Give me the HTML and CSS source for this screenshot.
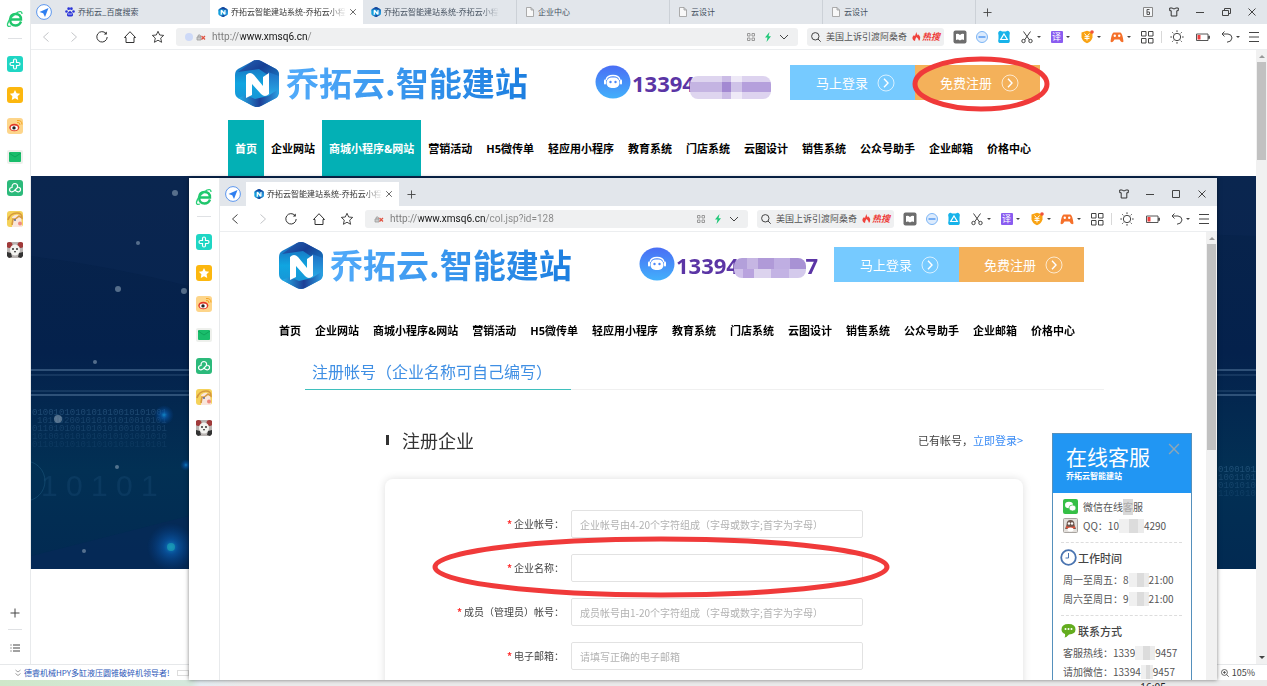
FILE: index.html
```html
<!DOCTYPE html>
<html lang="zh-CN">
<head>
<meta charset="utf-8">
<title>乔拓云智能建站系统</title>
<link rel="stylesheet" href="styles.css">
</head>
<body>
<svg class="defs" aria-hidden="true">
  <defs>
    <linearGradient id="g-left" x1="0" y1="0" x2="0" y2="1"><stop offset="0" stop-color="#1b62b8"/><stop offset=".5" stop-color="#10a5e0"/><stop offset="1" stop-color="#1b8fd2"/></linearGradient>
    <linearGradient id="g-top" x1="0" y1="0" x2="1" y2="1"><stop offset="0" stop-color="#2467b8"/><stop offset=".4" stop-color="#173f94"/><stop offset="1" stop-color="#1a93d8"/></linearGradient>
    <linearGradient id="g-right" x1="0" y1="0" x2="0" y2="1"><stop offset="0" stop-color="#1f6fc4"/><stop offset="1" stop-color="#2ab0ea"/></linearGradient>
    <linearGradient id="g-bot" x1="0" y1="0" x2="1" y2="0"><stop offset="0" stop-color="#25b4ec"/><stop offset=".55" stop-color="#1e3f96"/><stop offset="1" stop-color="#2b9be0"/></linearGradient>
    <linearGradient id="g-head" x1="0" y1="0" x2="0" y2="1"><stop offset="0" stop-color="#4a6ef5"/><stop offset="1" stop-color="#42b0fb"/></linearGradient>
    <radialGradient id="g-glow"><stop offset="0" stop-color="#0f86c4"/><stop offset=".3" stop-color="#0a5cae" stop-opacity=".7"/><stop offset="1" stop-color="#04408c" stop-opacity="0"/></radialGradient>
  </defs>
  <symbol id="i-logo" viewBox="0 0 44 47">
    <path d="M22 0Q24 0 26 1L41 9Q44 11 44 15V32Q44 36 41 38L26 46Q22 48 18 46L3 38Q0 36 0 32V15Q0 11 3 9L18 1Q20 0 22 0Z" fill="url(#g-left)"/>
    <path d="M3 12L18 1Q22-1 26 1L41 9Q44 11 44 15V33L33 26V15L24 9Z" fill="url(#g-top)"/>
    <path d="M33 12L44 16V33L38 38L33 36Z" fill="url(#g-right)"/>
    <path d="M11 35L20 39L33 36L42 30Q44 36 41 38L26 46Q22 48 18 46L3 38Z" fill="url(#g-bot)"/>
    <path d="M11 38V15Q15 11 19 15L28 26V17L34 13V34Q30 38 26 34L17 24V35Z" fill="#fff"/>
  </symbol>
  <symbol id="i-e" viewBox="0 0 18 18">
    <path d="M15 11.500Q13.500 15.500 9.500 15.500Q4.500 15.500 4 9.500Q4.500 4 9.500 4Q15 4 15 9.500H5" fill="none" stroke="#1fc66c" stroke-width="2.400"/>
    <path d="M5 16Q1 17.500 1.500 14Q3 8 12 2Q16 .5 16 4" fill="none" stroke="#28cf76" stroke-width="1.300"/>
  </symbol>
  <symbol id="i-plus4" viewBox="0 0 16 16"><rect width="16" height="16" rx="3" fill="#1fd6c4"/><path d="M6.500 6.500V4.500a1.500 1.500 0 0 1 3 0v2h2a1.500 1.500 0 0 1 0 3h-2v2a1.500 1.500 0 0 1-3 0v-2h-2a1.500 1.500 0 0 1 0-3z" fill="none" stroke="#fff" stroke-width="1.200"/></symbol>
  <symbol id="i-fav" viewBox="0 0 16 16"><rect width="16" height="16" rx="3" fill="#fcb70f"/><path d="M8 3l1.600 3.300 3.600.5-2.600 2.500.6 3.600L8 11.200l-3.200 1.700.6-3.600L2.800 6.800l3.600-.5z" fill="#fff"/></symbol>
  <symbol id="i-weibo" viewBox="0 0 16 16"><rect width="16" height="16" rx="3" fill="#fdd58a"/><ellipse cx="7.300" cy="9.500" rx="5" ry="3.800" fill="#e23a27"/><ellipse cx="7.300" cy="9.900" rx="3.600" ry="2.400" fill="#fff"/><circle cx="7" cy="9.900" r="1.700" fill="#222"/><path d="M10 4.500q3-.5 3 2.500M10 2.500q5-.5 5 4" stroke="#f5a523" fill="none"/></symbol>
  <symbol id="i-mail" viewBox="0 0 16 16"><rect y="1" width="16" height="14" rx="2" fill="#eef0ec"/><rect x="2" y="3" width="12" height="10" rx="1" fill="#19bd6b"/><path d="M2 4l6 4 6-4" stroke="#0a9a52" stroke-width=".7" fill="none"/></symbol>
  <symbol id="i-cloud" viewBox="0 0 16 16"><rect width="16" height="16" rx="3" fill="#2cba7b"/><path d="M10.500 7.500L7 11Q3.500 13 2.500 10Q2.500 7.500 5 7.500Q5 3.500 8 3.500Q11 4 10.500 7Q14 7.500 13.500 10Q12.500 13 9 11L8 10" fill="none" stroke="#fff" stroke-width="1.200"/></symbol>
  <symbol id="i-girl" viewBox="0 0 16 16"><rect width="16" height="16" rx="3" fill="#f5d25a"/><path d="M5 6Q9 2 14 5L15 16H5Z" fill="#f9e6dc"/><path d="M1 9Q3 2 10 2Q15 2 15 7L12 5Q8 9 6 8L5 14" fill="none" stroke="#d69a3e" stroke-width="1.600"/><circle cx="8" cy="9" r="1" fill="#5a6a9a"/><circle cx="13" cy="12.500" r="2" fill="#ef8a80"/></symbol>
  <symbol id="i-panda" viewBox="0 0 16 16"><rect width="16" height="16" rx="3" fill="#b9b4b2"/><circle cx="2.500" cy="3" r="3" fill="#a03a3a"/><circle cx="13.500" cy="3" r="3" fill="#a03a3a"/><ellipse cx="8" cy="8" rx="5" ry="5.500" fill="#f3f3f0"/><path d="M0 10l4 1 1 4-3 1-2-2zM16 10l-4 1-1 4 3 1 2-2z" fill="#333"/><circle cx="6" cy="7" r="1" fill="#333"/><circle cx="10" cy="7" r="1" fill="#333"/><path d="M7 9h2l-1 2z" fill="#222"/></symbol>
  <symbol id="i-plane" viewBox="0 0 16 16"><circle cx="8" cy="8" r="7.400" fill="#fff" stroke="#5b96ee"/><path d="M12.500 4L3.500 8l3.700 1.200L9 13z" fill="#2f7ff0"/></symbol>
  <symbol id="i-baidu" viewBox="0 0 10 10"><circle cx="1.500" cy="4.500" r="1.300" fill="#2b35d8"/><circle cx="3.700" cy="1.700" r="1.400" fill="#2b35d8"/><circle cx="6.400" cy="1.700" r="1.400" fill="#2b35d8"/><circle cx="8.500" cy="4.500" r="1.300" fill="#2b35d8"/><path d="M5 3.800Q6.500 4.500 8 7Q8.500 9.800 6 9.500H4Q1.500 9.800 2 7Q3.500 4.500 5 3.800z" fill="#2b35d8"/><path d="M4 6v2M6 6v2" stroke="#fff" stroke-width=".7"/></symbol>
  <symbol id="i-page" viewBox="0 0 10 10"><path d="M1.500.5h4.500l2.500 2.500v6.500h-7zM6 .5v2.500h2.500" fill="#f8f8f8" stroke="#999" stroke-width=".8"/></symbol>
  <symbol id="i-x" viewBox="0 0 10 10"><path d="M1.500 1.500l7 7M8.500 1.500l-7 7" stroke="currentColor" fill="none"/></symbol>
  <symbol id="i-add" viewBox="0 0 10 10"><path d="M5 .5v9M.5 5h9" stroke="#444" fill="none"/></symbol>
  <symbol id="i-back" viewBox="0 0 12 12"><path d="M8.500 1.500L3.500 6l5 4.500" fill="none" stroke="currentColor"/></symbol>
  <symbol id="i-fwd" viewBox="0 0 12 12"><path d="M3.500 1.500L8.500 6l-5 4.500" fill="none" stroke="currentColor"/></symbol>
  <symbol id="i-reload" viewBox="0 0 12 12"><path d="M10 2.500A5.200 5.200 0 1 0 11.200 6" fill="none" stroke="#333"/><path d="M10.800.5v3h-3z" fill="#333"/></symbol>
  <symbol id="i-home" viewBox="0 0 12 12"><path d="M2 11.500V6.500H.5L6 .7l5.500 5.800H10v5z" fill="none" stroke="#333"/></symbol>
  <symbol id="i-star" viewBox="0 0 12 12"><path d="M6 .3l1.700 3.700 4 .4-3 2.700.9 4.200L6 9.200l-3.600 2.100.9-4.200-3-2.700 4-.4z" fill="none" stroke="#333" stroke-width=".9"/></symbol>
  <symbol id="i-lock" viewBox="0 0 10 8"><path d="M1 4h4v3H1zM2 4V2.500q1-1.500 2.500 0V4" fill="#ccc" stroke="#999" stroke-width=".8"/><path d="M5.500 3l3.500 3.500M9 3L5.500 6.500" stroke="#e0503f" stroke-width="1.200"/></symbol>
  <symbol id="i-qr" viewBox="0 0 8 8"><path d="M.5.500h2.500v2.500H.500zM5 .5h2.500v2.500H5zM.500 5h2.500v2.500H.500zM5 5h2.500v2.500H5z" fill="none" stroke="#999"/></symbol>
  <symbol id="i-bolt" viewBox="0 0 8 10"><path d="M5.500 0L1 5.500h2.500L2.500 10 7 4.200H4.500z" fill="#1fc878"/></symbol>
  <symbol id="i-down" viewBox="0 0 10 6"><path d="M1 1l4 4 4-4" fill="none" stroke="#444"/></symbol>
  <symbol id="i-search" viewBox="0 0 10 10"><circle cx="4.300" cy="4.300" r="3.700" fill="none" stroke="#444"/><path d="M7 7l2.700 2.700" stroke="#444"/></symbol>
  <symbol id="i-zoom" viewBox="0 0 10 10"><circle cx="4.300" cy="4.300" r="3.700" fill="none" stroke="#444"/><path d="M7 7l2.700 2.700M2.500 4.300h3.600M4.300 2.500v3.600" stroke="#444"/></symbol>
  <symbol id="i-chev" viewBox="0 0 8 8"><path d="M1.500 1L4 3l2.500-2M1.500 4.500L4 6.500l2.500-2" fill="none" stroke="#888" stroke-width=".8"/></symbol>
  <symbol id="i-fire" viewBox="0 0 9 9"><path d="M4.500 0Q4.500 2 6 3.500L6.500 2.300Q9 5 8 7.500L7 9Q6.500 6.500 4.500 5Q3 7 3 9Q0 8 .5 5L2 3Q2.500 4 3 4Q3.500 2 4.500 0z" fill="#f0423c"/></symbol>
  <symbol id="i-book" viewBox="0 0 14 14"><rect x=".5" y=".5" width="13" height="13" rx="2" fill="#6d6d6d"/><path d="M3 4q2-1 4 1q2-2 4-1v6q-2-1-4 .5q-2-1.500-4-.5z" fill="#fff"/></symbol>
  <symbol id="i-dots" viewBox="0 0 14 14"><circle cx="7" cy="7" r="5.500" fill="#dcebfd" stroke="#7db5f5"/><path d="M3.500 7h7" stroke="#4b94ef" stroke-width="1.400"/></symbol>
  <symbol id="i-tri" viewBox="0 0 14 14"><path d="M2.500 1Q4 .5 5 1.500h4Q10 .5 11.500 1Q13.500 2 12.500 5v4Q13.500 12 11.500 13H2.500Q.5 12 1.500 9V5Q.5 2 2.500 1z" fill="#17b3ea"/><path d="M7 4l3.300 5.500H3.700z" fill="none" stroke="#fff" stroke-width="1.200"/></symbol>
  <symbol id="i-cut" viewBox="0 0 14 14"><path d="M3.500 1.500l6 8.500M10.500 1.500l-6 8.500" stroke="#444" fill="none"/><circle cx="3.500" cy="11" r="1.700" fill="none" stroke="#444"/><circle cx="10.500" cy="11" r="1.700" fill="none" stroke="#444"/></symbol>
  <symbol id="i-yen" viewBox="0 0 14 14"><path d="M7 .8l5.500 1.700v5Q11.500 11.500 7 13.300Q2.500 11.500 1.500 7.500v-5z" fill="#f9a313"/><path d="M4.500 3.500L7 6.500 9.500 3.500M7 6.500V10.500M4.500 6.700h5M4.500 8.500h5" stroke="#fff" fill="none"/><circle cx="12" cy="2" r="1.800" fill="#f0523c"/></symbol>
  <symbol id="i-game" viewBox="0 0 14 14"><path d="M3.500 2.500h7q2 1 3 9q-2 2-4-2h-5q-2 4-4 2q1-8 3-9z" fill="#f5702a"/><circle cx="4.800" cy="5.800" r="1.200" fill="#fff"/><circle cx="9.200" cy="5.800" r="1.200" fill="#fff"/></symbol>
  <symbol id="i-grid" viewBox="0 0 14 14"><path d="M1.500 1.500h4.500v4.500H1.500zM8.500 1.500H13v4.500H8.500zM1.500 8.500h4.500V13H1.500zM8.500 8.500H13V13H8.500z" fill="none" stroke="#444"/></symbol>
  <symbol id="i-sun" viewBox="0 0 14 14"><circle cx="7" cy="7" r="3.700" fill="none" stroke="#444"/><path d="M7 .3v1.700M7 12v1.700M.3 7H2M12 7h1.700M2.300 2.300l1 1M10.700 10.700l1 1M2.300 11.700l1-1M10.700 3.300l1-1" stroke="#444"/></symbol>
  <symbol id="i-bat" viewBox="0 0 14 14"><path d="M.5 4h11.500v6.500H.5zM12.500 6h1v2.500h-1z" fill="none" stroke="#555"/><path d="M1.500 5h3v4.500h-3z" fill="#ee3f3f"/></symbol>
  <symbol id="i-undo" viewBox="0 0 14 14"><path d="M2 4h6q4 .5 4 4q-.5 4-5 4.200M4.500 1.500L2 4l2.500 2.500" fill="none" stroke="#444"/></symbol>
  <symbol id="i-menu" viewBox="0 0 14 14"><path d="M2 2.500h10M2 7h10M2 11.500h10" stroke="#444"/></symbol>
  <symbol id="i-shirt" viewBox="0 0 10 10"><path d="M.7 1h2.300q2 2 4 0h2.300v2.700H7.800V9H2.200V3.700H.7z" fill="none" stroke="#333"/></symbol>
  <symbol id="i-min" viewBox="0 0 10 10"><path d="M1 5.500h8" stroke="#444"/></symbol>
  <symbol id="i-max" viewBox="0 0 10 10"><path d="M1.500 1.500h7v7h-7z" fill="none" stroke="#444"/></symbol>
  <symbol id="i-rest" viewBox="0 0 10 10"><path d="M1.500 3.500h6v5h-6zM3.500 3V1.500h6v5H8" fill="none" stroke="#444"/></symbol>
  <symbol id="i-six" viewBox="0 0 10 10"><path d="M.5.500h9v9h-9z" fill="#f4f6f8" stroke="#888"/><path d="M6.500 2.500H4v5h2.500v-2.500H4" fill="none" stroke="#555"/></symbol>
  <symbol id="i-agent" viewBox="0 0 36 34"><ellipse cx="18" cy="17" rx="17.500" ry="16.500" fill="url(#g-head)"/><path d="M11 15Q12 10.500 18 10.500Q24 10.500 25 15" fill="none" stroke="#fff" stroke-width="1.300"/><rect x="11.500" y="12.500" width="13" height="10.500" rx="5" fill="#fff"/><rect x="9" y="14.500" width="2" height="5" rx="1" fill="#fff"/><rect x="25" y="14.500" width="2" height="5" rx="1" fill="#fff"/><circle cx="15.500" cy="17" r="1.200" fill="#4a86f8"/><circle cx="20.500" cy="17" r="1.200" fill="#4a86f8"/></symbol>
  <symbol id="i-go" viewBox="0 0 18 18"><circle cx="9" cy="9" r="8" fill="none" stroke="#fff" stroke-opacity=".7"/><path d="M7 4.800L11 9l-4 4.200" fill="none" stroke="#fff" stroke-width="1.400"/></symbol>
  <symbol id="i-list" viewBox="0 0 10 10"><path d="M.500 2h1M.500 5h1M.500 8h1M3 2h7M3 5h7M3 8h7" stroke="#444"/></symbol>
</svg>

<div class="desktop">
  <section class="window window-back">
    <aside class="rail">
      <svg class="rail-logo"><use href="#i-e"/></svg>
      <hr>
      <svg><use href="#i-plus4"/></svg><svg><use href="#i-fav"/></svg><svg><use href="#i-weibo"/></svg><svg><use href="#i-mail"/></svg><svg><use href="#i-cloud"/></svg><svg><use href="#i-girl"/></svg><svg><use href="#i-panda"/></svg>
      <div class="rail-foot"><button aria-label="添加"><svg><use href="#i-add"/></svg></button><hr><button aria-label="列表"><svg><use href="#i-list"/></svg></button></div>
    </aside>
    <div class="main">
      <div class="tabs">
        <svg class="plane"><use href="#i-plane"/></svg>
        <div class="tab"><svg><use href="#i-baidu"/></svg><span>乔拓云_百度搜索</span></div>
        <div class="tab active"><svg><use href="#i-logo"/></svg><span class="fade">乔拓云智能建站系统-乔拓云小程</span><button aria-label="关闭标签"><svg><use href="#i-x"/></svg></button></div>
        <div class="tab"><svg><use href="#i-logo"/></svg><span class="fade">乔拓云智能建站系统-乔拓云小程</span></div>
        <div class="tab ruled"><svg><use href="#i-page"/></svg><span>企业中心</span></div>
        <div class="tab ruled"><svg><use href="#i-page"/></svg><span>云设计</span></div>
        <div class="tab ruled"><svg><use href="#i-page"/></svg><span>云设计</span></div>
        <button class="new-tab" aria-label="新标签"><svg><use href="#i-add"/></svg></button>
        <div class="controls"><button aria-label="6"><svg><use href="#i-six"/></svg></button><button aria-label="皮肤"><svg><use href="#i-shirt"/></svg></button><button aria-label="最小化"><svg><use href="#i-min"/></svg></button><button aria-label="还原"><svg><use href="#i-rest"/></svg></button><button aria-label="关闭"><svg><use href="#i-x"/></svg></button></div>
      </div>
      <div class="toolbar">
        <div class="nav-buttons"><button class="off" aria-label="后退"><svg><use href="#i-back"/></svg></button><button class="off" aria-label="前进"><svg><use href="#i-fwd"/></svg></button><button aria-label="刷新"><svg><use href="#i-reload"/></svg></button><button aria-label="主页"><svg><use href="#i-home"/></svg></button><button aria-label="收藏"><svg><use href="#i-star"/></svg></button></div>
        <div class="address"><i class="spot"></i><svg class="lock"><use href="#i-lock"/></svg><input aria-label="地址" value="http://www.xmsq6.cn/"><svg class="s8"><use href="#i-qr"/></svg><svg class="bolt"><use href="#i-bolt"/></svg><svg class="down"><use href="#i-down"/></svg></div>
        <div class="search"><svg><use href="#i-search"/></svg><input aria-label="搜索" value="美国上诉引渡阿桑奇"><svg class="fire"><use href="#i-fire"/></svg><b>热搜</b></div>
        <div class="tools"><button aria-label="阅读"><svg><use href="#i-book"/></svg></button><button aria-label="更多"><svg><use href="#i-dots"/></svg></button><button aria-label="助手"><svg><use href="#i-tri"/></svg></button><button class="drop" aria-label="截图"><svg><use href="#i-cut"/></svg></button><button class="drop"><span class="yi">译</span></button><button class="drop" aria-label="优惠"><svg><use href="#i-yen"/></svg></button><button class="drop" aria-label="游戏"><svg><use href="#i-game"/></svg></button><button class="grid" aria-label="应用"><svg><use href="#i-grid"/></svg></button><i class="sep"></i><button class="wide" aria-label="亮度"><svg><use href="#i-sun"/></svg></button><button class="wide" aria-label="电池"><svg><use href="#i-bat"/></svg></button><button class="drop undo" aria-label="撤销"><svg><use href="#i-undo"/></svg></button><button aria-label="菜单"><svg><use href="#i-menu"/></svg></button></div>
      </div>
      <div class="viewport">
        <main class="page page-home">
          <header class="site-head">
            <svg class="logo"><use href="#i-logo"/></svg>
            <h1 class="brand">乔拓云.<em>智能建站</em></h1>
            <div class="phone"><svg><use href="#i-agent"/></svg><span>133940</span><i class="mosaic large"></i></div>
            <div class="cta"><a href="#login">马上登录<svg><use href="#i-go"/></svg></a><a class="orange" href="#reg">免费注册<svg><use href="#i-go"/></svg></a></div>
          </header>
          <nav class="site-nav"><a class="on" href="#1">首页</a><a href="#2">企业网站</a><a class="on" href="#3">商城小程序&amp;网站</a><a href="#4">营销活动</a><a href="#5">H5微传单</a><a href="#6">轻应用小程序</a><a href="#7">教育系统</a><a href="#8">门店系统</a><a href="#9">云图设计</a><a href="#10">销售系统</a><a href="#11">公众号助手</a><a href="#12">企业邮箱</a><a href="#13">价格中心</a></nav>
          <div class="hero">
            <svg viewBox="0 0 1225 393" preserveAspectRatio="xMinYMin slice">
              <path d="M0 0h1225v60Q700 40 500 150L158 110Q80 90 0 80z" fill="#0d2c58" opacity=".35"/>
              <path d="M0 380L158 340V393H0z" fill="#08275a" opacity=".5"/>
              <path d="M0 194h1225M0 219h1225" stroke="#7fa3c6" stroke-width="2" opacity=".35"/>
              <path d="M0 199h1225M0 215h1225" stroke="#7fa3c6" opacity=".3"/>
              <g font-family="Liberation Mono, monospace" font-size="9" fill="#4d80ab" opacity=".38"><text x="1" y="239">0100101010101010010101001</text><text x="6" y="247" opacity=".8">101102001010101010010101</text><text x="1" y="255" opacity=".7">0110101001010101001010101</text><text x="1" y="263" opacity=".5">1010010101010010101001010</text><text x="1" y="271" opacity=".4">0110101010110101010110101</text><text x="1187" y="296">0100101</text><text x="1187" y="304" opacity=".8">1001101</text><text x="1187" y="312" opacity=".7">0101010</text><text x="1187" y="320" opacity=".5">1101010</text></g>
              <text x="10" y="320" font-family="Liberation Sans, sans-serif" font-size="30" fill="#2c6490" opacity=".2">1 0 1 0 1</text>
              <circle cx="-6" cy="305" r="20" fill="none" stroke="#1e5a80" opacity=".5"/>
              <circle cx="133" cy="239" r="10" fill="url(#g-glow)"/><circle cx="155" cy="289" r="6" fill="url(#g-glow)"/><circle cx="140" cy="371" r="24" fill="url(#g-glow)"/><circle cx="140" cy="371" r="4" fill="#20a8b4" opacity=".6"/>
              <g fill="#8ba1b5" opacity=".6"><circle cx="144" cy="17" r="3"/><circle cx="107" cy="67" r="2"/><circle cx="87" cy="113" r="3"/><circle cx="64" cy="186" r="2"/><circle cx="27" cy="243" r="4"/><circle cx="86" cy="291" r="2"/><circle cx="53" cy="375" r="2"/><circle cx="153" cy="115" r="3"/></g>
            </svg>
          </div>
        </main>
        <div class="scroll"><i class="up"></i><i class="thumb short"></i><i class="dn"></i></div>
      </div>
    </div>
    <footer class="status"><svg class="chev"><use href="#i-chev"/></svg><a href="#ad">德睿机械HPY多缸液压圆锥破碎机领导者!</a><i class="chip"></i><button class="zoom"><svg><use href="#i-zoom"/></svg>105%</button></footer>
  </section>

  <section class="window window-front">
    <aside class="rail">
      <svg class="rail-logo"><use href="#i-e"/></svg>
      <hr>
      <svg><use href="#i-plus4"/></svg><svg><use href="#i-fav"/></svg><svg><use href="#i-weibo"/></svg><svg><use href="#i-mail"/></svg><svg><use href="#i-cloud"/></svg><svg><use href="#i-girl"/></svg><svg><use href="#i-panda"/></svg>
    </aside>
    <div class="main">
      <div class="tabs">
        <svg class="plane"><use href="#i-plane"/></svg>
        <div class="tab active"><svg><use href="#i-logo"/></svg><span class="fade">乔拓云智能建站系统-乔拓云小程</span><button aria-label="关闭标签"><svg><use href="#i-x"/></svg></button></div>
        <button class="new-tab" aria-label="新标签"><svg><use href="#i-add"/></svg></button>
        <div class="controls"><button aria-label="皮肤"><svg><use href="#i-shirt"/></svg></button><button aria-label="最小化"><svg><use href="#i-min"/></svg></button><button aria-label="最大化"><svg><use href="#i-max"/></svg></button><button aria-label="关闭"><svg><use href="#i-x"/></svg></button></div>
      </div>
      <div class="toolbar">
        <div class="nav-buttons"><button aria-label="后退"><svg><use href="#i-back"/></svg></button><button class="off" aria-label="前进"><svg><use href="#i-fwd"/></svg></button><button aria-label="刷新"><svg><use href="#i-reload"/></svg></button><button aria-label="主页"><svg><use href="#i-home"/></svg></button><button aria-label="收藏"><svg><use href="#i-star"/></svg></button></div>
        <div class="address"><svg class="lock"><use href="#i-lock"/></svg><input aria-label="地址" value="http://www.xmsq6.cn/col.jsp?id=128"><svg class="s8"><use href="#i-qr"/></svg><svg class="bolt"><use href="#i-bolt"/></svg><svg class="down"><use href="#i-down"/></svg></div>
        <div class="search"><svg><use href="#i-search"/></svg><input aria-label="搜索" value="美国上诉引渡阿桑奇"><svg class="fire"><use href="#i-fire"/></svg><b>热搜</b></div>
        <div class="tools"><button aria-label="阅读"><svg><use href="#i-book"/></svg></button><button aria-label="更多"><svg><use href="#i-dots"/></svg></button><button aria-label="助手"><svg><use href="#i-tri"/></svg></button><button class="drop" aria-label="截图"><svg><use href="#i-cut"/></svg></button><button class="drop"><span class="yi">译</span></button><button class="drop" aria-label="优惠"><svg><use href="#i-yen"/></svg></button><button class="drop" aria-label="游戏"><svg><use href="#i-game"/></svg></button><button class="grid" aria-label="应用"><svg><use href="#i-grid"/></svg></button><i class="sep"></i><button class="wide" aria-label="亮度"><svg><use href="#i-sun"/></svg></button><button class="wide" aria-label="电池"><svg><use href="#i-bat"/></svg></button><button class="drop undo" aria-label="撤销"><svg><use href="#i-undo"/></svg></button><button aria-label="菜单"><svg><use href="#i-menu"/></svg></button></div>
      </div>
      <div class="viewport">
        <main class="page page-reg">
          <header class="site-head">
            <svg class="logo"><use href="#i-logo"/></svg>
            <h1 class="brand">乔拓云.<em>智能建站</em></h1>
            <div class="phone"><svg><use href="#i-agent"/></svg><span>133940</span><i class="mosaic"></i><span>7</span></div>
            <div class="cta"><a href="#login">马上登录<svg><use href="#i-go"/></svg></a><a class="orange" href="#reg">免费注册<svg><use href="#i-go"/></svg></a></div>
          </header>
          <nav class="site-nav"><a href="#1">首页</a><a href="#2">企业网站</a><a href="#3">商城小程序&amp;网站</a><a href="#4">营销活动</a><a href="#5">H5微传单</a><a href="#6">轻应用小程序</a><a href="#7">教育系统</a><a href="#8">门店系统</a><a href="#9">云图设计</a><a href="#10">销售系统</a><a href="#11">公众号助手</a><a href="#12">企业邮箱</a><a href="#13">价格中心</a></nav>
          <div class="reg-tabs"><h2>注册帐号（企业名称可自己编写）</h2></div>
          <div class="reg">
            <div class="reg-title"><h3>注册企业</h3><p>已有帐号，<a href="#login">立即登录&gt;</a></p></div>
            <form class="card">
              <label for="f1"><b>*</b>企业帐号：</label><input id="f1" placeholder="企业帐号由4-20个字符组成（字母或数字;首字为字母）">
              <label for="f2"><b>*</b>企业名称：</label><input id="f2">
              <label for="f3"><b>*</b>成员（管理员）帐号：</label><input id="f3" placeholder="成员帐号由1-20个字符组成（字母或数字;首字为字母）">
              <label for="f4"><b>*</b>电子邮箱：</label><input id="f4" placeholder="请填写正确的电子邮箱">
            </form>
          </div>
        </main>
        <div class="scroll"><i class="up"></i><i class="thumb"></i></div>
      </div>
    </div>
    <aside class="chat">
      <header><div><h4>在线客服</h4><p>乔拓云智能建站</p></div><button aria-label="关闭"><svg><use href="#i-x"/></svg></button></header>
      <section>
        <p><svg viewBox="0 0 15 15"><rect width="15" height="15" rx="2" fill="#35bf46"/><ellipse cx="6" cy="6" rx="4" ry="3.300" fill="#fff"/><ellipse cx="9.500" cy="9" rx="3.500" ry="3" fill="#fff" stroke="#35bf46" stroke-width=".7"/></svg><span>微信在线</span><span class="veil">客</span><span>服</span></p>
        <p><svg viewBox="0 0 15 15"><rect x=".5" y=".5" width="14" height="14" rx="1" fill="#e3dfdb" stroke="#a8a4a0"/><path d="M3.500 7Q3.500 2 7.500 2Q11.500 2 11.500 7L13 11H2z" fill="#70584f"/><circle cx="6" cy="5.500" r="1.200" fill="#fff"/><circle cx="9" cy="5.500" r="1.200" fill="#fff"/><path d="M3 8q4.500 2 9 0v2q-4.500 2-9 0z" fill="#e0523a"/><ellipse cx="7.500" cy="11.500" rx="3" ry="2" fill="#fff"/></svg><span>QQ：</span><span>10</span><i class="blur wide-blur"></i><span>4290</span></p>
      </section>
      <section>
        <h5><svg viewBox="0 0 17 17"><circle cx="8.500" cy="8.500" r="7.300" fill="#fff" stroke="#4a74b0" stroke-width="1.800"/><path d="M8.500 4v5H5.500" fill="none" stroke="#4a74b0"/></svg>工作时间</h5>
        <p><span>周一至周五：</span><span>8</span><i class="blur"></i><span>21:00</span></p>
        <p><span>周六至周日：</span><span>9</span><i class="blur"></i><span>21:00</span></p>
      </section>
      <section>
        <h5><svg viewBox="0 0 17 17"><path d="M8.500 2Q15.500 2 15.500 7.500Q15.500 12 9 12.500Q7 15 4.500 15.500Q5.500 14 5 12Q1.500 10.500 1.500 7.500Q1.500 2 8.500 2z" fill="#63ac1e"/><circle cx="5.500" cy="7" r="1" fill="#fff"/><circle cx="8.500" cy="7" r="1" fill="#fff"/><circle cx="11.500" cy="7" r="1" fill="#fff"/></svg>联系方式</h5>
        <p><span>客服热线：</span><span>1339</span><i class="blur"></i><span>9457</span></p>
        <p><span>请加微信：</span><span>13394</span><i class="blur slim"></i><span>9457</span></p>
      </section>
    </aside>
  </section>

  <svg class="mark mark-cta" viewBox="0 0 138 56" aria-hidden="true"><ellipse cx="69" cy="28" rx="66" ry="25"/></svg>
  <svg class="mark mark-name" viewBox="0 0 458 62" aria-hidden="true"><ellipse cx="229" cy="31" rx="226" ry="28"/></svg>
  <div class="taskbar"><time>16:05</time></div>
</div>
</body>
</html>
```
FILE: styles.css
```css
* { box-sizing: border-box; }
body {
  margin: 0;
  font: 10px/16px "Noto Sans CJK SC", sans-serif;
  color: #444;
  background: #fff;
}
h1, h2, h3, h4, h5, p { margin: 0; font-weight: 400; }
a { color: inherit; text-decoration: none; }
i { font-style: normal; }
button {
  display: flex;
  align-items: center;
  justify-content: center;
  padding: 0;
  border: 0;
  background: none;
  color: #444;
  font: inherit;
}
input { min-width: 0; border: 0; padding: 0; background: none; font: inherit; outline: 0; }
svg { display: block; flex: none; }
.defs { position: absolute; width: 0; height: 0; }

.desktop { position: relative; display: flex; flex-direction: column; height: 100vh; overflow: hidden; }
.window { background: #fff; display: grid; grid-template-columns: 31px 1fr; overflow: hidden; }
.window-back { flex: 1; min-height: 0; grid-template-rows: 1fr 16px; }
.window-front {
  position: absolute;
  left: 189px;
  right: 50px;
  top: 178px;
  bottom: 6px;
  grid-template-rows: 1fr;
  box-shadow: 0 0 4px rgba(0, 0, 0, .5);
}

/* Side rail */
.rail { display: flex; flex-direction: column; align-items: center; gap: 15px; padding-top: 10px; border-right: 1px solid #e8eaec; min-height: 0; }
.rail svg { width: 16px; height: 16px; }
.rail .rail-logo { width: 18px; height: 18px; margin-bottom: -5px; }
.rail hr { width: 14px; border: 0; border-top: 1px solid #dfe1e4; margin: 0 0 2px; }
.rail-foot { margin-top: auto; display: flex; flex-direction: column; align-items: center; gap: 11px; padding-bottom: 11px; }
.rail-foot svg { width: 10px; height: 10px; }

/* Tab strip */
.main { display: flex; flex-direction: column; min-width: 0; min-height: 0; }
.tabs { display: flex; background: #e2e6eb; height: 24px; flex: none; }
.window-front .tabs { height: 28px; padding-top: 4px; }
.plane { width: 16px; height: 16px; margin: 4px 5px; }
.tab { display: flex; align-items: center; gap: 3px; width: 153px; padding: 0 6px 0 8px; font-size: 8px; color: #44505f; white-space: nowrap; }
.tab > svg { width: 10px; height: 10px; }
.tab.active { background: #fff; color: #333; }
.tab.ruled { border-left: 1px solid #ccd1d7; }
.tab button svg { width: 8px; height: 8px; }
.fade { -webkit-mask-image: linear-gradient(90deg, #000 85%, transparent); mask-image: linear-gradient(90deg, #000 85%, transparent); }
.tab button { margin-left: auto; }
.new-tab { width: 24px; border-left: 1px solid #ccd1d7; }
.window-front .new-tab { border: 0; }
.new-tab svg { width: 9px; height: 9px; }
.controls { display: flex; margin-left: auto; padding-right: 2px; }
.controls button { width: 26px; }
.controls svg { width: 10px; height: 10px; }

/* Toolbar */
.toolbar { display: flex; align-items: center; height: 26px; flex: none; border-bottom: 1px solid #eceef0; background: #fff; }
.nav-buttons { display: flex; padding: 0 4px 0 1px; }
.nav-buttons button { width: 28px; }
.nav-buttons svg { width: 12px; height: 12px; }
.nav-buttons .off { color: #c4c6c9; }
.address { display: flex; align-items: center; flex: 1; min-width: 0; height: 18px; padding: 0 9px; background: #eff0f1; border-radius: 3px; }
.address input {
  flex: 1;
  margin-left: 6px;
  font: 10px/18px Roboto, sans-serif;
  color: transparent;
  background: linear-gradient(90deg, #777 29px, #111 29px, #111 96px, #888 96px);
  -webkit-background-clip: text;
  background-clip: text;
}
.spot { width: 8px; height: 8px; margin-right: 3px; border-radius: 4px; background: #cdd9f7; }
.lock { width: 10px; height: 8px; }
.s8 { width: 8px; height: 8px; }
.bolt { width: 8px; height: 10px; margin: 0 7px 0 9px; }
.down { width: 10px; height: 6px; }
.search { display: flex; align-items: center; width: 137px; height: 18px; margin-left: 9px; padding: 0 4px; background: #eff0f1; border-radius: 3px; font-size: 9px; }
.search svg { width: 10px; height: 10px; margin-right: 5px; }
.search input { flex: 1; color: #555; }
.search .fire { width: 9px; height: 9px; margin: 0 1px; }
.search b { color: #ee3b38; font-style: italic; }
.tools { display: flex; align-items: center; padding: 0 2px 0 5px; }
.tools svg { width: 14px; height: 14px; }
.tools button { width: 22px; height: 18px; }
.tools .drop { width: 30px; gap: 3px; }
.tools .drop::after { content: ""; border: 2px solid transparent; border-top-color: #444; border-bottom: 0; }
.tools .grid { width: 24px; }
.tools .wide { width: 26px; }
.tools .undo { width: 27px; gap: 2px; }
.sep { width: 1px; height: 12px; margin: 0 2px; background: #d8d8d8; }
.yi { width: 12px; background: #8a5cf0; color: #fff; font-size: 9px; line-height: 12px; border-radius: 1px; }

/* Scrolling area */
.viewport { flex: 1; min-height: 0; display: flex; overflow: hidden; }
.page { flex: 1; min-width: 0; overflow: hidden; }
.scroll { width: 11px; display: flex; flex-direction: column; align-items: center; background: #f1f1f1; }
.up { margin: 5px 0 4px; border: 3px solid transparent; border-bottom-color: #999; border-top: 0; }
.dn { margin: auto 0 5px; border: 3px solid transparent; border-top-color: #444; border-bottom: 0; }
.thumb { width: 9px; height: 46%; background: #c1c1c1; }
.thumb.short { height: 16%; }

/* Site header */
.site-head { display: flex; height: 70px; padding-top: 10px; }
.page-home .site-head, .page-home .site-nav { padding-left: 197px; }
.page-reg .site-head, .page-reg .site-nav { padding-left: 52px; }
.logo { width: 44px; height: 47px; margin: 0 7px; }
.brand { width: 309px; font-size: 33px; line-height: 44px; font-weight: 700; background: linear-gradient(90deg, #52abfa, #1d7fe0 240px); -webkit-background-clip: text; background-clip: text; color: transparent; white-space: nowrap; }
.brand em { font-style: normal; }
.phone { display: flex; width: 195px; height: 44px; color: #5b35a5; font: 700 22px/47px "Noto Sans", sans-serif; }
.phone svg { width: 36px; height: 34px; margin: 5px 1px 0 0; }
.mosaic {
  width: 72px;
  height: 20px;
  margin: 16px 0 0 -18px;
  border-radius: 8px;
  background: linear-gradient(90deg, #b3a0da 18%, #c6b6e3 18% 34%, #b09ad8 34% 55%, #bfaee2 55% 78%, #a892d4 78%) 0 0 / 100% 55% no-repeat, linear-gradient(90deg, #cfc0ea 12%, #b9a3de 12% 28%, #dcd3ee 28% 52%, #c3b3e4 52% 76%, #d4caec 76%);
}
.mosaic.large {
  width: 81px;
  height: 23px;
  background: linear-gradient(90deg, #c4b4e2 39%, #a389d2 39% 51%, #cfc3e8 51% 64%, #b5a0dc 64%) 0 6px / 100% 10px no-repeat, linear-gradient(90deg, #ded5ef 39%, #cbbce6 39% 51%, #eee9f7 51% 64%, #ddd3ef 64%);
}
.cta { display: flex; margin-top: 5px; }
.cta a { display: flex; align-items: center; gap: 9px; width: 125px; height: 35px; padding-left: 26px; background: #76caff; color: #fff; font-size: 13px; }
.cta .orange { background: #f4b15a; padding-left: 25px; }
.cta svg { width: 18px; height: 18px; }
.site-nav { display: flex; height: 56px; font-family: "Noto Sans", "Noto Sans CJK SC", sans-serif; line-height: 57px; font-size: 11px; font-weight: 700; color: #000; white-space: nowrap; }
.site-nav a { padding: 0 7px; }
.site-nav .on { background: #03b0b5; color: #fff; }
.hero { height: 393px; background: linear-gradient(180deg, #09244b, #04214c 45%, #023054 75%, #022a52); }
.hero svg { width: 100%; height: 100%; }

/* Registration page */
.reg-tabs { display: flex; margin: 0 102px 0 85px; border-bottom: 1px solid #f0f0f0; }
.reg-tabs h2 { width: 266px; margin-bottom: -1px; padding: 0 0 5px 7px; border-bottom: 1px solid #3fc0bd; font-size: 16px; line-height: 26px; color: #3f8fe4; white-space: nowrap; }
.reg { width: 638px; margin-left: 165px; }
.reg-title { display: flex; justify-content: space-between; align-items: flex-start; height: 89px; }
.reg-title h3 { display: flex; align-items: center; gap: 13px; margin-top: 35px; font-size: 18px; line-height: 30px; color: #333; }
.reg-title h3::before { content: ""; width: 3px; height: 10px; margin-left: 1px; background: #333; }
.reg-title p { margin-top: 42px; font-size: 11px; }
.reg-title a { color: #3b8cf5; }
.card { display: grid; grid-template-columns: 175px 292px; column-gap: 11px; row-gap: 16px; padding: 31px 0 30px; border-radius: 8px; box-shadow: 0 0 8px rgba(0, 0, 0, .13); }
.card label { text-align: right; line-height: 28px; white-space: nowrap; margin-right: -4px; }
.card label b { color: #f33; margin-right: 2px; }
.card input { height: 28px; padding: 0 8px; border: 1px solid #e2e2e2; border-radius: 2px; }
.card input::placeholder { color: #b2b2b2; }

/* Support panel */
.chat { position: absolute; right: 25px; top: 255px; width: 140px; bottom: 0; overflow: hidden; border: 1px solid #5590bc; border-bottom: 0; background: #fff; color: #555; }
.chat header { display: flex; justify-content: space-between; align-items: flex-start; height: 59px; padding: 8px 10px 0 13px; background: #2196f3; color: #fff; }
.chat h4 { font-size: 21px; line-height: 29px; }
.chat header p { font-size: 8px; line-height: 10px; font-weight: 700; }
.chat header button { color: #8fa6b5; }
.chat header svg { width: 14px; height: 14px; }
.chat section { margin: 0 9px 0 8px; padding: 4px 0 7px 2px; border-bottom: 1px dashed #ddd; }
.chat section p { display: flex; align-items: center; height: 19px; white-space: nowrap; }
.chat section p svg { width: 15px; height: 15px; margin-right: 5px; }
.chat h5 { display: flex; align-items: center; gap: 1px; height: 19px; margin: 1px 0 3px -3px; font-size: 11px; font-weight: 500; color: #444; }
.chat h5 svg { width: 17px; height: 17px; }
.veil { background: #d8d8d8; color: #aaa; }
.blur { width: 20px; height: 14px; background: linear-gradient(90deg, #f0f0f0 40%, #dcdcdc 40% 75%, #ebebeb 75%); }
.wide-blur { width: 25px; }
.slim { width: 12px; }

/* Status bar and taskbar */
.status { grid-column: 1 / -1; display: flex; align-items: center; gap: 2px; padding: 0 12px 0 14px; border-top: 1px solid #e6e8ea; background: #fff; font-size: 8px; color: #2c57b8; }
.chev { width: 8px; height: 8px; }
.chip { width: 12px; height: 6px; margin-left: 5px; border: 1px solid #ddd; }
.zoom { margin-left: auto; gap: 3px; color: #444; font-size: 9px; }
.zoom svg { width: 8px; height: 8px; }
.taskbar { flex: none; height: 6px; overflow: hidden; background: linear-gradient(90deg, #cfe7c9, #d4e8dc 190px, #e4edf3 200px, #ebebeb 242px); }
.taskbar time { display: block; margin-left: 90%; font: 10px/14px "Noto Sans", sans-serif; color: #222; }

/* Hand-drawn marks */
.mark { position: absolute; fill: none; stroke: #f03a3a; stroke-width: 5; }
.mark-cta { left: 912px; top: 56px; width: 138px; height: 56px; }
.mark-name { left: 432px; top: 536px; width: 458px; height: 62px; }
```
